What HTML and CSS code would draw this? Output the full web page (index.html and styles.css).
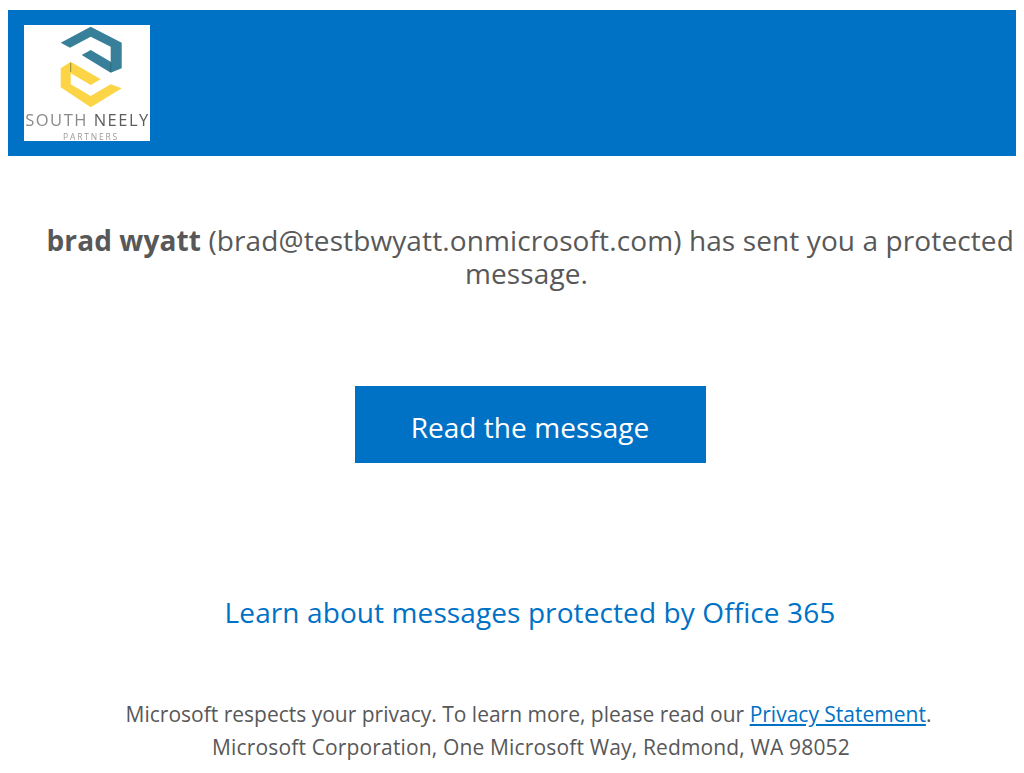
FILE: index.html
```html
<!DOCTYPE html>
<html lang="en">
<head>
<meta charset="utf-8">
<title>Protected message</title>
<link rel="stylesheet" href="styles.css">
</head>
<body>
<header class="banner">
  <div class="logo">
    <svg class="logo-mark" viewBox="0 0 126 115" width="126" height="115" aria-hidden="true">
      <path class="teal" d="M36.700 17.700 L66.700 1.700 L97.700 17.700 L97.700 43.300 L86.700 47.700 L57.700 30 L66.700 25 L86.700 36.700 L86.700 21.700 L66.700 11.700 L46 22.700 Z"/>
      <path class="yellow" d="M46.700 36.700 L76.700 54.300 L66.700 60 L46.700 48.300 L46.700 59.300 L66.700 71 L86.700 59.300 L97.700 63.300 L66.700 82.300 L36.700 62.300 L36.700 43.300 Z"/>
      <path class="seam-teal" d="M86.700 38 L86.700 47"/>
      <path class="seam-yellow" d="M46.700 38 L46.700 47"/>
      <text class="logo-name" x="63.500" y="100.500" text-anchor="middle">SOUTH <tspan class="logo-dark">NEELY</tspan></text>
      <text class="logo-sub" x="67" y="115" text-anchor="middle">PARTNERS</text>
    </svg>
  </div>
</header>
<main class="content">
  <p class="intro">&nbsp;<strong>brad wyatt</strong> (brad@testbwyatt.onmicrosoft.com) has sent you a protected message.</p>
  <a class="button" href="#">Read the message</a>
  <a class="learn" href="#">Learn about messages protected by Office 365</a>
  <footer class="legal">
    <p class="privacy">Microsoft respects your privacy. To learn more, please read our <a href="#">Privacy Statement</a>.</p>
    <p class="address">Microsoft Corporation, One Microsoft Way, Redmond, WA 98052</p>
  </footer>
</main>
</body>
</html>
```
FILE: styles.css
```css
* { box-sizing: border-box; }
html, body { height: 100%; }
body {
  margin: 0;
  padding: 9.500px 8px 0;
  background: #fff;
  color: #585858;
  font-family: "Open Sans", "Noto Sans", "Liberation Sans", sans-serif;
  overflow: hidden;
}
.banner {
  height: 146.500px;
  background: #0072c6;
  padding: 15.500px 16px;
}
.logo {
  width: 126px;
  height: 115.500px;
  background: #fff;
}
.logo-mark { display: block; overflow: visible; filter: blur(0.5px); }
.teal { fill: #38809a; }
.yellow { fill: #fbd545; }
.seam-teal { stroke: #2c5f72; stroke-width: 0.800; fill: none; }
.seam-yellow { stroke: #7a7340; stroke-width: 0.800; fill: none; }
.logo-name { font-size: 16.500px; fill: #8a8a8a; letter-spacing: 1.500px; font-family: "Open Sans", sans-serif; }
.logo-dark { fill: #5c5c5c; }
.logo-sub { font-size: 8.500px; fill: #9a9a9a; letter-spacing: 1.800px; font-family: "Open Sans", sans-serif; }
.content {
  display: flex;
  flex-direction: column;
  align-items: center;
  padding-left: 36px;
}
.intro {
  margin: 68px 0 0 -7px;
  width: 984px;
  text-align: center;
  font-size: 28px;
  line-height: 33px;
  letter-spacing: 0.110px;
}
.button {
  display: block;
  width: 351px;
  height: 77px;
  margin-top: 96px;
  padding-top: 6px;
  background: #0072c6;
  color: #fff;
  text-align: center;
  text-decoration: none;
  font-size: 28px;
  line-height: 71px;
  letter-spacing: 0.050px;
}
.learn {
  margin-top: 129px;
  color: #0072c6;
  text-decoration: none;
  font-size: 28px;
  line-height: 40px;
  letter-spacing: 0.100px;
}
.legal {
  margin-top: 66px;
  width: 100%;
  text-align: center;
  font-size: 21px;
  line-height: 33px;
}
.legal p { margin: 0; }
.legal .privacy { padding-right: 3px; }
.legal .address { padding-left: 2px; letter-spacing: 0.150px; }
.legal a { color: #0072c6; }
```
